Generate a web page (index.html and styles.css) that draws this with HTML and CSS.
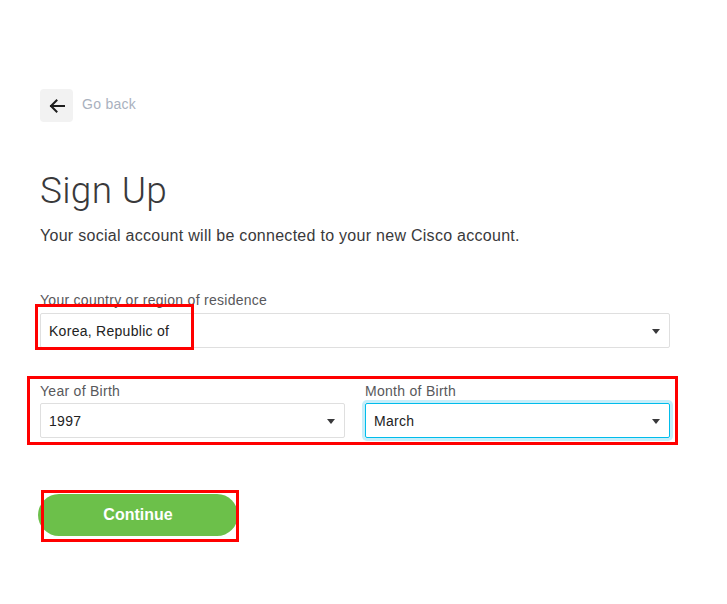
FILE: index.html
```html
<!DOCTYPE html>
<html lang="en">
<head>
<meta charset="utf-8">
<title>Sign Up</title>
<link rel="stylesheet" href="styles.css">
</head>
<body>
<main class="page">
  <div class="back">
    <span class="back-btn">
      <svg width="16" height="14" viewBox="0 0 16 14" aria-hidden="true">
        <path d="M15.5 7H2M7.5 1.5L2 7l5.5 5.5" fill="none" stroke="#1e1e1e" stroke-width="2" stroke-linecap="square"/>
      </svg>
    </span>
    <span class="back-text">Go back</span>
  </div>

  <h1 class="title">Sign Up</h1>
  <p class="subtitle">Your social account will be connected to your new Cisco account.</p>

  <div class="field field-country">
    <label class="label">Your country or region of residence</label>
    <div class="select"><span>Korea, Republic of</span><i class="caret"></i></div>
  </div>

  <div class="row">
    <div class="field">
      <label class="label">Year of Birth</label>
      <div class="select"><span>1997</span><i class="caret"></i></div>
    </div>
    <div class="field">
      <label class="label">Month of Birth</label>
      <div class="select focused"><span>March</span><i class="caret"></i></div>
    </div>
  </div>

  <button class="continue">Continue</button>
</main>

<div class="mark mark-country"></div>
<div class="mark mark-birth"></div>
<div class="mark mark-continue"></div>
</body>
</html>
```

FILE: styles.css
```css
* { box-sizing: border-box; }

html, body {
  margin: 0;
  background: #ffffff;
}

body {
  position: relative;
  width: 727px;
  height: 604px;
  font-family: "Liberation Sans", Arial, sans-serif;
  color: #39393b;
  letter-spacing: 0.28px;
}

.page {
  padding: 89px 0 0 40px;
  width: 670px;
}

.back {
  display: flex;
  align-items: center;
  gap: 9px;
}

.back-btn {
  width: 33px;
  height: 33px;
  border-radius: 4px;
  background: #f2f2f2;
  display: flex;
  align-items: center;
  justify-content: center;
}

.back-text {
  font-size: 14px;
  line-height: 16px;
  margin-top: -3px;
  color: #a9b1be;
}

.title {
  margin: 47px 0 0;
  font-family: Roboto, "Liberation Sans", sans-serif;
  font-weight: 300;
  font-size: 37px;
  line-height: 43px;
  letter-spacing: 0.3px;
  color: #39393b;
}

.subtitle {
  margin: 14px 0 0;
  font-size: 16px;
  line-height: 20px;
  color: #39393b;
}

.field-country {
  margin-top: 46px;
}

.label {
  display: block;
  font-size: 14px;
  line-height: 17px;
  color: #58585b;
  margin-bottom: 4px;
}

.select {
  position: relative;
  height: 35px;
  border: 1px solid #dfdfdf;
  border-radius: 2px;
  display: flex;
  align-items: center;
  padding: 0 8px;
  font-size: 14px;
  color: #222222;
}

.select.focused {
  border-color: #00bceb;
  box-shadow: 0 0 0 3px #c6eefa;
}

.caret {
  position: absolute;
  right: 9px;
  top: 15px;
  width: 0;
  height: 0;
  border-left: 4px solid transparent;
  border-right: 4px solid transparent;
  border-top: 5px solid #39393b;
}

.row {
  margin-top: 35px;
  display: grid;
  grid-template-columns: 305px 305px;
  gap: 20px;
}

.row .label {
  margin-bottom: 3px;
}

.continue {
  display: block;
  margin: 56px 0 0 -2px;
  width: 200px;
  height: 42px;
  border: 0;
  border-radius: 21px;
  background: #6cc04a;
  color: #ffffff;
  font-family: "Liberation Sans", Arial, sans-serif;
  font-weight: bold;
  font-size: 16px;
  letter-spacing: 0;
}

.mark {
  position: absolute;
  border: 3px solid #ff0000;
  pointer-events: none;
}

.mark-country { left: 35px; top: 304px; width: 159px; height: 46px; }
.mark-birth { left: 27px; top: 376px; width: 651px; height: 69px; }
.mark-continue { left: 41px; top: 490px; width: 198px; height: 52px; }
```
